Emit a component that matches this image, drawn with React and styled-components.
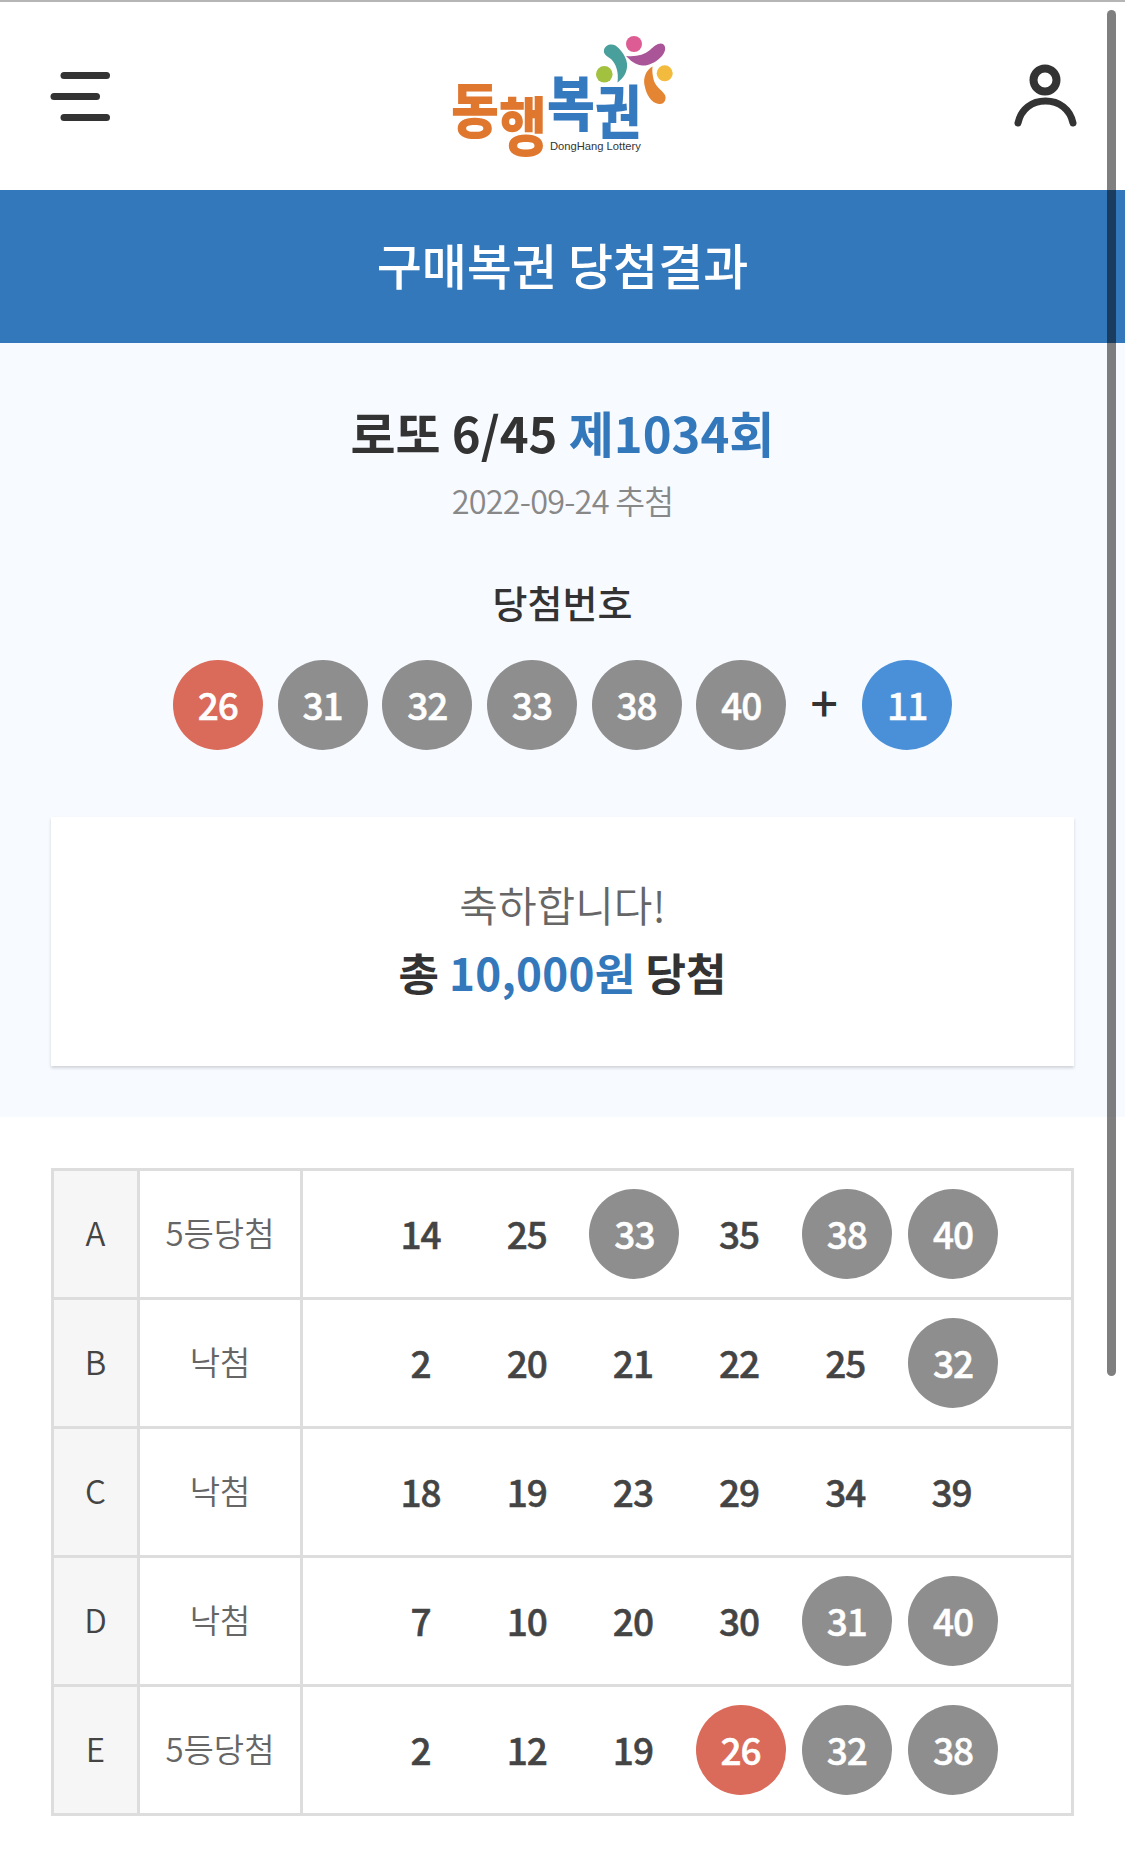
import React from 'react'
import styled, { createGlobalStyle } from 'styled-components'

const GlobalStyle = createGlobalStyle`
  html, body {
    margin: 0;
    padding: 0;
    background: #fff;
  }
  body {
    font-family: "Noto Sans CJK KR", "Noto Sans", sans-serif;
  }
`

const Page = styled.div`
  position: relative;
  width: 1125px;
  height: 1859px;
  overflow: hidden;
  background: #fff;
`

const Scrollbar = styled.div`
  position: absolute;
  top: 10px;
  left: 1107px;
  width: 9px;
  height: 1366px;
  border-radius: 5px;
  background: rgba(0, 0, 0, 0.5);
`

const Header = styled.header`
  height: 188px;
  border-top: 2px solid #b5b5b5;
  padding: 0 46px 0 50px;
  display: flex;
  align-items: center;
  justify-content: space-between;
`

const Banner = styled.h1`
  margin: 0;
  height: 153px;
  box-sizing: border-box;
  padding-bottom: 7px;
  background: #3478bc;
  color: #fff;
  display: flex;
  align-items: center;
  justify-content: center;
  font-size: 49px;
  font-weight: 500;
`

const Summary = styled.section`
  background: #f7faff;
  height: 774px;
  padding: 0 51px;
  box-sizing: border-box;
  display: flex;
  flex-direction: column;
  align-items: center;
`

const Round = styled.h2`
  margin: 54px 0 0;
  font-size: 49px;
  line-height: 70px;
  font-weight: 700;
  color: #333;
`

const Accent = styled.span`
  color: #3478bc;
`

const PrizeAmount = styled(Accent)`
  letter-spacing: 0.3px;
`

const DrawDate = styled.p`
  margin: 10px 0 0;
  font-size: 32.5px;
  line-height: 46px;
  font-weight: 350;
  letter-spacing: -0.8px;
  color: #888;
`

const NumbersTitle = styled.h3`
  margin: 52px 0 0;
  font-size: 38px;
  line-height: 54px;
  font-weight: 500;
  color: #333;
`

const WinRow = styled.div`
  margin-top: 31px;
  display: flex;
  align-items: center;
  gap: 14.7px;
`

const Plus = styled.span`
  width: 46.5px;
  text-align: center;
  font-size: 48px;
  line-height: 90px;
  font-weight: 500;
  color: #333;
  margin-top: -8px;
`

const ballColors = {
  red: '#da6a5a',
  gray: '#8e8e8e',
  blue: '#4a90d9',
}

const Ball = styled.span`
  width: 90px;
  height: 90px;
  flex: none;
  box-sizing: border-box;
  padding-bottom: 2px;
  border-radius: 50%;
  background: ${(p) => ballColors[p.$tone]};
  color: #fff;
  display: flex;
  align-items: center;
  justify-content: center;
  font-size: 37px;
  font-weight: 500;
  letter-spacing: -1px;
  -webkit-text-stroke: 0.5px #fff;
`

const ResultCard = styled.div`
  margin-top: 67px;
  width: 100%;
  height: 249px;
  box-sizing: border-box;
  padding-bottom: 7px;
  background: #fff;
  box-shadow: 0 2px 3px rgba(0, 0, 0, 0.16);
  display: flex;
  flex-direction: column;
  align-items: center;
  justify-content: center;
`

const Congrats = styled.p`
  margin: 0;
  font-size: 42px;
  line-height: 68px;
  font-weight: 350;
  color: #666;
`

const Prize = styled.p`
  margin: 0;
  font-size: 44px;
  line-height: 68px;
  font-weight: 700;
  color: #333;
`

const Ticket = styled.div`
  margin: 51px 51px 0;
  display: grid;
  grid-template-columns: 83px 160px 1fr;
  grid-auto-rows: 126px;
  gap: 3px;
  padding: 3px;
  background: #ddd;
`

const Cell = styled.div`
  display: flex;
  align-items: center;
  justify-content: center;
  background: #fff;
`

const GameCell = styled(Cell)`
  background: #f6f6f6;
  padding-bottom: 4px;
  font-size: 33px;
  font-weight: 350;
  color: #444;
`

const StatusCell = styled(Cell)`
  padding-bottom: 4px;
  font-size: 33px;
  font-weight: 350;
  color: #666;
`

const NumbersCell = styled(Cell)`
  gap: 16.2px;
  padding-left: 1px;
`

const PlainNumber = styled.span`
  width: 90px;
  box-sizing: border-box;
  padding: 0 3px 3px 0;
  text-align: center;
  font-size: 37px;
  font-weight: 500;
  letter-spacing: -1px;
  -webkit-text-stroke: 0.5px #444;
  color: #444;
`

const MenuIcon = () => (
  <svg width="60" height="60" viewBox="50 65 60 60" fill="none" stroke="#333" strokeWidth="7" strokeLinecap="round">
    <path d="M64 74.5H106.500" />
    <path d="M54 95.500H96.500" />
    <path d="M64 116.500H106.500" />
  </svg>
)

const UserIcon = () => (
  <svg width="67" height="68" viewBox="1012 62 67 68" fill="none" stroke="#333" strokeLinecap="round">
    <circle cx="1045" cy="80" r="11.500" strokeWidth="8" />
    <path strokeWidth="7" d="M1018 123C1021 109 1032 101 1045.500 101C1059 101 1070 109 1073 123" />
  </svg>
)

const LogoSvg = styled.svg`
  display: block;
  overflow: visible;
  font-family: "Noto Sans CJK KR", sans-serif;
  font-weight: 900;
`

const Logo = () => (
  <LogoSvg width="284" height="140" viewBox="420 26 284 140">
    <circle cx="635" cy="44" r="8" fill="#dc5c93" />
    <circle cx="605.300" cy="74.300" r="8.300" fill="#a2c13f" />
    <circle cx="665.700" cy="73.300" r="8" fill="#f3bb3d" />
    <path fill="#489f9b" d="M605 50C606 45 612 43 616.500 45.500C625 52 630 62 627.500 70C626 76 622 80 618.500 82.500C620 72 617 64 612 59C608 56 604 54 605 50Z" />
    <path fill="#aa5597" d="M627 56C637 57 645 55 651 50C655 46 660 42 664 44C668 47 666 53 662 57C656 63 649 66 643 65.500C636 65 631 60 627 56Z" />
    <path fill="#e38532" d="M653.500 66.500C647 70 644 78 645.500 85C647 94 652 103 660 104C665 105 668 99 666 95C663 90 657 87 655 81C653.500 76 653 71 653.500 66.500Z" />
    <g fill="#e0772f">
      <text transform="translate(452 133) scale(1 1.16)" fontSize="52">동</text>
      <text transform="translate(500 150) scale(1 1.22)" fontSize="52">행</text>
    </g>
    <g fill="#3579bf">
      <text transform="translate(548 126) scale(1 1.15)" fontSize="52">복</text>
      <text transform="translate(596 134) scale(1 1.15)" fontSize="50">권</text>
    </g>
    <text x="551" y="150" fontSize="11.200" fontWeight="400" fill="#333" style={{ fontFamily: '"Liberation Sans", sans-serif' }}>
      DongHang Lottery
    </text>
  </LogoSvg>
)

const winning = [26, 31, 32, 33, 38, 40]
const toneOf = (n) => (n === 26 ? 'red' : 'gray')

const games = [
  { id: 'A', status: '5등당첨', numbers: [14, 25, 33, 35, 38, 40] },
  { id: 'B', status: '낙첨', numbers: [2, 20, 21, 22, 25, 32] },
  { id: 'C', status: '낙첨', numbers: [18, 19, 23, 29, 34, 39] },
  { id: 'D', status: '낙첨', numbers: [7, 10, 20, 30, 31, 40] },
  { id: 'E', status: '5등당첨', numbers: [2, 12, 19, 26, 32, 38] },
]

export default function App() {
  return (
    <Page>
      <GlobalStyle />
      <Header>
        <MenuIcon />
        <Logo />
        <UserIcon />
      </Header>
      <Banner>구매복권 당첨결과</Banner>
      <Summary>
        <Round>
          로또 6/45 <Accent>제1034회</Accent>
        </Round>
        <DrawDate>2022-09-24 추첨</DrawDate>
        <NumbersTitle>당첨번호</NumbersTitle>
        <WinRow>
          {winning.map((n) => (
            <Ball key={n} $tone={toneOf(n)}>{n}</Ball>
          ))}
          <Plus>+</Plus>
          <Ball $tone="blue">11</Ball>
        </WinRow>
        <ResultCard>
          <Congrats>축하합니다!</Congrats>
          <Prize>
            총 <PrizeAmount>10,000원</PrizeAmount> 당첨
          </Prize>
        </ResultCard>
      </Summary>
      <Ticket>
        {games.map((g) => (
          <React.Fragment key={g.id}>
            <GameCell>{g.id}</GameCell>
            <StatusCell>{g.status}</StatusCell>
            <NumbersCell>
              {g.numbers.map((n) =>
                winning.includes(n) ? (
                  <Ball key={n} $tone={toneOf(n)}>{n}</Ball>
                ) : (
                  <PlainNumber key={n}>{n}</PlainNumber>
                )
              )}
            </NumbersCell>
          </React.Fragment>
        ))}
      </Ticket>
      <Scrollbar />
    </Page>
  )
}
